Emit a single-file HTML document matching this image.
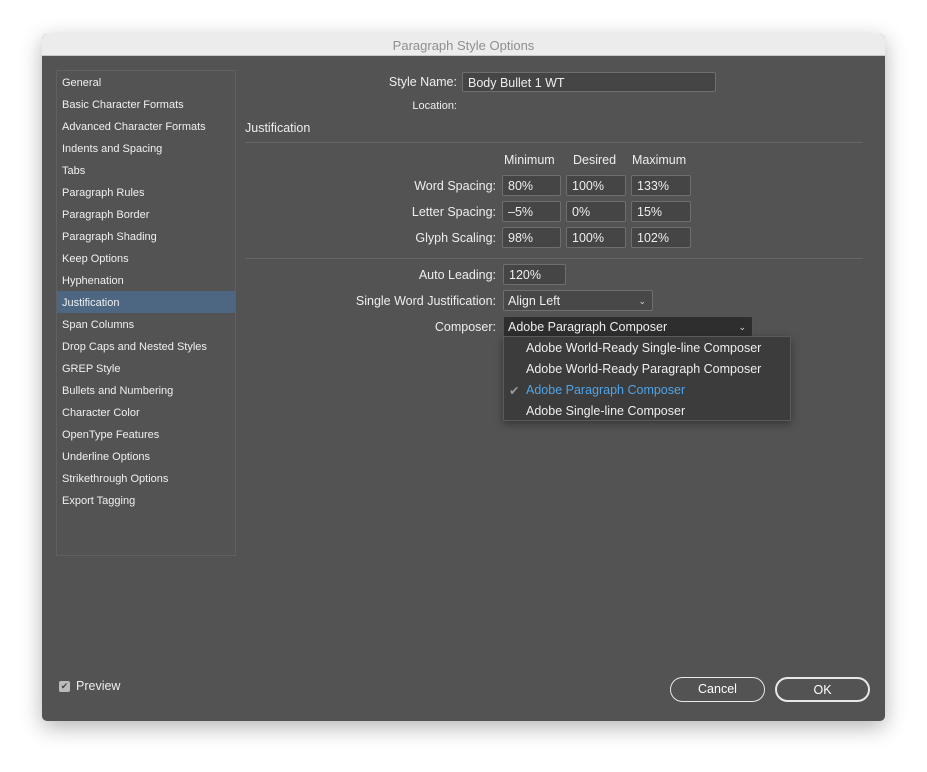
<!DOCTYPE html>
<html><head><style>
*{margin:0;padding:0;box-sizing:border-box}
body{width:927px;height:772px;background:#fff;font-family:"Liberation Sans",sans-serif;position:relative;overflow:hidden}
.dlg{position:absolute;left:42px;top:34px;width:843px;height:687px;background:#535353;border-radius:5px;box-shadow:0 6px 22px rgba(0,0,0,.3);overflow:hidden}
.title{position:absolute;left:0;top:0;width:100%;height:22px;background:#ececec;border-bottom:1px solid #c8c8c8;text-align:center;font-size:13px;color:#8f8f8f;line-height:23px}
.side{position:absolute;left:14px;top:36px;width:180px;height:486px;border:1px solid #606060}
.side div{height:22px;line-height:24px;padding-left:5px;font-size:11px;color:#f0f0f0}
.side .sel{background:#4d6782}
.a{position:absolute;color:#eee;font-size:12.5px;white-space:nowrap}
.r{text-align:right}
.in{position:absolute;background:#454545;border:1px solid #6e6e6e;border-radius:2px;color:#eee;font-size:12.5px;padding-left:5px;line-height:20px}
.sl{position:absolute;background:#484848;border:1px solid #6e6e6e;border-radius:2px;color:#eee;font-size:12.5px;padding-left:4px;line-height:20px}
.chev{position:absolute;right:6px;top:0px;font-size:9px;color:#ddd}
.hr{position:absolute;height:1px;background:#666}
.menu{position:absolute;left:461px;top:302px;width:288px;height:85px;background:#3c3c3c;border:1px solid #5a5a5a;box-shadow:0 3px 8px rgba(0,0,0,.35)}
.menu div{position:absolute;left:22px;font-size:12.5px;color:#eee;white-space:nowrap}
.btn{position:absolute;height:25px;border:1.5px solid #e8e8e8;border-radius:13px;color:#fff;font-size:12.5px;text-align:center;line-height:23px}
</style></head><body>
<div class="dlg">
<div class="title">Paragraph Style Options</div>
<div class="side">
<div>General</div><div>Basic Character Formats</div><div>Advanced Character Formats</div><div>Indents and Spacing</div><div>Tabs</div><div>Paragraph Rules</div><div>Paragraph Border</div><div>Paragraph Shading</div><div>Keep Options</div><div>Hyphenation</div><div class="sel">Justification</div><div>Span Columns</div><div>Drop Caps and Nested Styles</div><div>GREP Style</div><div>Bullets and Numbering</div><div>Character Color</div><div>OpenType Features</div><div>Underline Options</div><div>Strikethrough Options</div><div>Export Tagging</div>
</div>
<div class="a r" style="right:428px;top:41px">Style Name:</div>
<div class="in" style="left:420px;top:38px;width:254px;height:20px">Body Bullet 1 WT</div>
<div class="a r" style="right:428px;top:66px;font-size:11px">Location:</div>
<div class="a" style="left:203px;top:87px">Justification</div>
<div class="hr" style="left:203px;top:108px;width:618px"></div>
<div class="a" style="left:462px;top:119px">Minimum</div>
<div class="a" style="left:531px;top:119px">Desired</div>
<div class="a" style="left:590px;top:119px">Maximum</div>
<div class="a r" style="right:389px;top:145px">Word Spacing:</div>
<div class="a r" style="right:389px;top:171px">Letter Spacing:</div>
<div class="a r" style="right:389px;top:197px">Glyph Scaling:</div>
<div class="in" style="left:460px;top:141px;width:59px;height:21px">80%</div>
<div class="in" style="left:524px;top:141px;width:60px;height:21px">100%</div>
<div class="in" style="left:589px;top:141px;width:60px;height:21px">133%</div>
<div class="in" style="left:460px;top:167px;width:59px;height:21px">–5%</div>
<div class="in" style="left:524px;top:167px;width:60px;height:21px">0%</div>
<div class="in" style="left:589px;top:167px;width:60px;height:21px">15%</div>
<div class="in" style="left:460px;top:193px;width:59px;height:21px">98%</div>
<div class="in" style="left:524px;top:193px;width:60px;height:21px">100%</div>
<div class="in" style="left:589px;top:193px;width:60px;height:21px">102%</div>
<div class="hr" style="left:203px;top:224px;width:618px"></div>
<div class="a r" style="right:389px;top:234px">Auto Leading:</div>
<div class="in" style="left:461px;top:230px;width:63px;height:21px">120%</div>
<div class="a r" style="right:389px;top:260px">Single Word Justification:</div>
<div class="sl" style="left:461px;top:256px;width:150px;height:21px">Align Left<span class="chev">&#8964;</span></div>
<div class="a r" style="right:389px;top:286px">Composer:</div>
<div class="sl" style="left:461px;top:282px;width:250px;height:21px;background:#2e2e2e;border-color:#555">Adobe Paragraph Composer<span class="chev">&#8964;</span></div>
<div class="menu">
<div style="top:4px">Adobe World-Ready Single-line Composer</div>
<div style="top:25px">Adobe World-Ready Paragraph Composer</div>
<div style="top:46px;color:#4fa3e8"><span style="position:absolute;left:-17px;color:#999">&#10004;</span>Adobe Paragraph Composer</div>
<div style="top:67px">Adobe Single-line Composer</div>
</div>
<div style="position:absolute;left:17px;top:647px;width:11px;height:11px;background:#bbb;border-radius:2px;color:#444;font-size:9px;line-height:11px;text-align:center">&#10004;</div>
<div class="a" style="left:34px;top:645px">Preview</div>
<div class="btn" style="left:628px;top:643px;width:95px">Cancel</div>
<div class="btn" style="left:733px;top:643px;width:95px;border-width:2px;line-height:22px">OK</div>
</div>
</body></html>
